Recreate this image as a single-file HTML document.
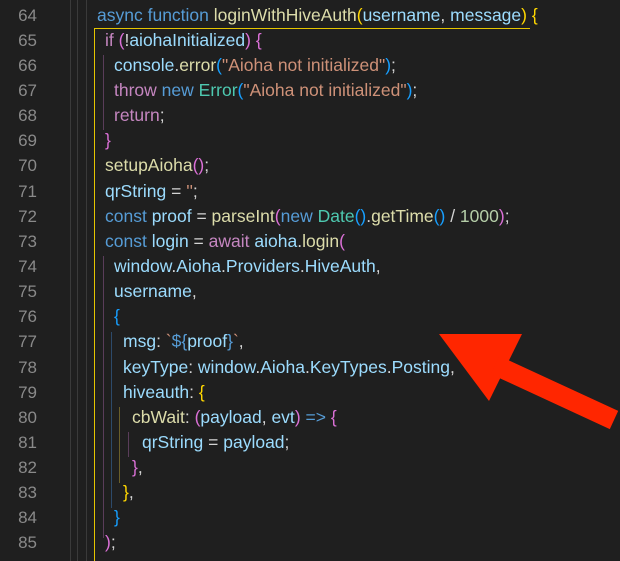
<!DOCTYPE html>
<html><head><meta charset="utf-8"><style>
html,body{margin:0;width:620px;height:561px;overflow:hidden;}
body{background:#1f1f1f;position:relative;font-family:"Liberation Sans",Helvetica,Arial,sans-serif;font-size:17.5px;}
.ln{position:absolute;left:0;width:37px;text-align:right;color:#8a8a8a;height:25.14px;line-height:25.14px;font-size:17px;}
.c{position:absolute;white-space:pre;height:25.14px;line-height:25.14px;color:#d4d4d4;}
.g{position:absolute;width:1px;}
.k{color:#569cd6}.p{color:#c586c0}.f{color:#dcdcaa}.v{color:#9cdcfe}.s{color:#ce9178}.t{color:#4ec9b0}.n{color:#b5cea8}
.b1{color:#ffd700}.b2{color:#da70d6}.b3{color:#179fff}
</style></head><body>
<div class="g" style="left:70px;top:0;height:561px;background:#3a3a3a"></div>
<div class="g" style="left:77px;top:0;height:561px;background:#3a3a3a"></div>
<div class="g" style="left:86px;top:0;height:561px;background:#3a3a3a"></div>
<div style="position:absolute;left:94px;top:28px;width:435px;height:533px;border-left:1px solid #e5c500;border-top:1px solid #e5c500"></div>
<div class="g" style="left:103px;top:55px;height:75px;background:#5a3d5a"></div>
<div class="g" style="left:103px;top:256px;height:282px;background:#5a3d5a"></div>
<div class="g" style="left:111px;top:332px;height:176px;background:#2d4a6a"></div>
<div class="g" style="left:119px;top:407px;height:76px;background:#6a5f2a"></div>
<div class="g" style="left:128px;top:432px;height:25px;background:#5a3d5a"></div>

<div class="ln" style="top:2.5px">64</div>
<div class="ln" style="top:27.6px">65</div>
<div class="ln" style="top:52.8px">66</div>
<div class="ln" style="top:77.9px">67</div>
<div class="ln" style="top:103.1px">68</div>
<div class="ln" style="top:128.2px">69</div>
<div class="ln" style="top:153.3px">70</div>
<div class="ln" style="top:178.5px">71</div>
<div class="ln" style="top:203.6px">72</div>
<div class="ln" style="top:228.8px">73</div>
<div class="ln" style="top:253.9px">74</div>
<div class="ln" style="top:279.0px">75</div>
<div class="ln" style="top:304.2px">76</div>
<div class="ln" style="top:329.3px">77</div>
<div class="ln" style="top:354.5px">78</div>
<div class="ln" style="top:379.6px">79</div>
<div class="ln" style="top:404.7px">80</div>
<div class="ln" style="top:429.9px">81</div>
<div class="ln" style="top:455.0px">82</div>
<div class="ln" style="top:480.2px">83</div>
<div class="ln" style="top:505.3px">84</div>
<div class="ln" style="top:530.4px">85</div>

<div class="c" style="top:2.5px;left:97px"><span class="k">async</span> <span class="k">function</span> <span class="f">loginWithHiveAuth</span><span class="b1">(</span><span class="v">username</span>, <span class="v">message</span><span class="b1">)</span> <span class="b1">{</span></div>
<div class="c" style="top:27.6px;left:105px"><span class="p">if</span> <span class="b2">(</span>!<span class="v">aiohaInitialized</span><span class="b2">)</span> <span class="b2">{</span></div>
<div class="c" style="top:52.8px;left:114px"><span class="v">console</span>.<span class="f">error</span><span class="b3">(</span><span class="s">"Aioha not initialized"</span><span class="b3">)</span>;</div>
<div class="c" style="top:77.9px;left:114px"><span class="p">throw</span> <span class="k">new</span> <span class="t">Error</span><span class="b3">(</span><span class="s">"Aioha not initialized"</span><span class="b3">)</span>;</div>
<div class="c" style="top:103.1px;left:114px"><span class="p">return</span>;</div>
<div class="c" style="top:128.2px;left:105px"><span class="b2">}</span></div>
<div class="c" style="top:153.3px;left:105px"><span class="f">setupAioha</span><span class="b2">()</span>;</div>
<div class="c" style="top:178.5px;left:105px"><span class="v">qrString</span> = <span class="s">''</span>;</div>
<div class="c" style="top:203.6px;left:105px"><span class="k">const</span> <span class="v">proof</span> = <span class="f">parseInt</span><span class="b2">(</span><span class="k">new</span> <span class="t">Date</span><span class="b3">()</span>.<span class="f">getTime</span><span class="b3">()</span> / <span class="n">1000</span><span class="b2">)</span>;</div>
<div class="c" style="top:228.8px;left:105px"><span class="k">const</span> <span class="v">login</span> = <span class="p">await</span> <span class="v">aioha</span>.<span class="f">login</span><span class="b2">(</span></div>
<div class="c" style="top:253.9px;left:114px"><span class="v">window</span>.<span class="v">Aioha</span>.<span class="v">Providers</span>.<span class="v">HiveAuth</span>,</div>
<div class="c" style="top:279.0px;left:114px"><span class="v">username</span>,</div>
<div class="c" style="top:304.2px;left:114px"><span class="b3">{</span></div>
<div class="c" style="top:329.3px;left:123px"><span class="v">msg</span>: <span class="s">`</span><span class="k">${</span><span class="v">proof</span><span class="k">}</span><span class="s">`</span>,</div>
<div class="c" style="top:354.5px;left:123px"><span class="v">keyType</span>: <span class="v">window</span>.<span class="v">Aioha</span>.<span class="v">KeyTypes</span>.<span class="v">Posting</span>,</div>
<div class="c" style="top:379.6px;left:123px"><span class="v">hiveauth</span>: <span class="b1">{</span></div>
<div class="c" style="top:404.7px;left:132px"><span class="f">cbWait</span>: <span class="b2">(</span><span class="v">payload</span>, <span class="v">evt</span><span class="b2">)</span> <span class="k">=&gt;</span> <span class="b2">{</span></div>
<div class="c" style="top:429.9px;left:142px"><span class="v">qrString</span> = <span class="v">payload</span>;</div>
<div class="c" style="top:455.0px;left:132px"><span class="b2">}</span>,</div>
<div class="c" style="top:480.2px;left:123px"><span class="b1">}</span>,</div>
<div class="c" style="top:505.3px;left:114px"><span class="b3">}</span></div>
<div class="c" style="top:530.4px;left:105px"><span class="b2">)</span>;</div>

<svg style="position:absolute;left:0;top:0" width="620" height="561">
<polygon points="439,334 522,334 489,401" fill="#ff2600"/>
<line x1="495" y1="365" x2="614" y2="420" stroke="#ff2600" stroke-width="20"/>
</svg>
</body></html>
